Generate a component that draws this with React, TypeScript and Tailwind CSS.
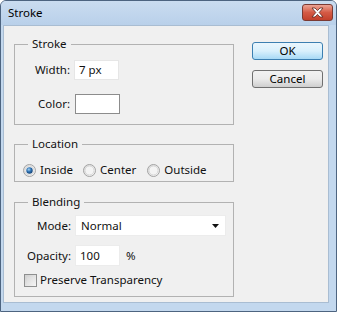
import React from 'react';

const font = { fontFamily: '"Segoe UI", "Noto Sans", Arial, sans-serif' };

function Radio({ checked }: { checked?: boolean }) {
  return (
    <svg width="13" height="13" viewBox="0 0 13 13" className="shrink-0">
      <defs>
        <linearGradient id="rfill" x1="0" y1="0" x2="1" y2="1">
          <stop offset="0" stopColor="#d8d8d8" />
          <stop offset="1" stopColor="#fbfbfb" />
        </linearGradient>
        <radialGradient id="rdot" cx="0.4" cy="0.35" r="0.7">
          <stop offset="0" stopColor="#a6d4f4" />
          <stop offset="0.5" stopColor="#2b6fb0" />
          <stop offset="1" stopColor="#123d6e" />
        </radialGradient>
      </defs>
      <circle cx="6.5" cy="6.5" r="6" fill="url(#rfill)" stroke="#a3a3a3" />
      <circle cx="6.5" cy="6.5" r="4.5" fill="#f4f4f4" stroke="#d0d0d0" strokeWidth="0.8" />
      {checked && <circle cx="6.5" cy="6.5" r="3.2" fill="url(#rdot)" />}
    </svg>
  );
}

function Group({ title, children, className }: { title: string; children: React.ReactNode; className?: string }) {
  return (
    <fieldset className={`border border-[#b2b2b2] w-[220px] ${className ?? ''}`}>
      <legend className="ml-[13px] px-[4px] leading-[16px]">{title}</legend>
      {children}
    </fieldset>
  );
}

export default function App() {
  return (
    <div
      className="w-[337px] h-[312px] flex flex-col bg-[#c3d8ee] border border-[#4d6480] rounded-t-[6px] overflow-hidden text-[11.5px] text-[#111]"
      style={font}
    >
      {/* title bar */}
      <div className="h-[24px] flex items-start justify-between bg-gradient-to-b from-[#cadcf0] to-[#b9d0ea]">
        <span className="ml-[7px] mt-[4px] leading-[16px] text-black">Stroke</span>
        <div className="mt-[3px] mr-[3px] w-[31px] h-[17px] rounded-[3px] border border-[#7a3a33] bg-gradient-to-b from-[#eba394] via-[#d45a45] to-[#c2402b] flex items-center justify-center">
          <svg width="13" height="11" viewBox="0 0 13 11">
            <path
              d="M1 1 L4 1 L6.5 3.6 L9 1 L12 1 L8.2 5.5 L12 10 L9 10 L6.5 7.4 L4 10 L1 10 L4.8 5.5 Z"
              fill="#fff"
              stroke="#5a2620"
              strokeWidth="0.8"
              strokeLinejoin="round"
            />
          </svg>
        </div>
      </div>

      {/* client area */}
      <div className="flex-1 ml-[2px] mr-[7px] mb-[8px] bg-[#f0f0f0] border border-[#a9bdd2] flex pl-[10px] pt-[10px]">
        <div className="flex flex-col">
          <Group title="Stroke">
            <div className="flex flex-col gap-[14px] pt-[8px] pb-[10px]">
              <div className="flex items-center gap-[4px] h-[20px]">
                <span className="w-[55px] text-right">Width:</span>
                <div className="w-[45px] h-[20px] bg-white border border-[#e6e6e6] pl-[4px] leading-[18px]">7 px</div>
              </div>
              <div className="flex items-center gap-[4px] h-[20px]">
                <span className="w-[55px] text-right">Color:</span>
                <div className="ml-[1px] w-[45px] h-[20px] bg-white border border-[#8c8c8c]" />
              </div>
            </div>
          </Group>

          <Group title="Location" className="mt-[11px]">
            <div className="flex items-center h-[16px] mt-[10px] mb-[3px] pl-[8px]">
              <label className="flex items-center gap-[4px]">
                <Radio checked />
                <span>Inside</span>
              </label>
              <label className="flex items-center gap-[4px] ml-[10px]">
                <Radio />
                <span>Center</span>
              </label>
              <label className="flex items-center gap-[4px] ml-[11px]">
                <Radio />
                <span>Outside</span>
              </label>
            </div>
          </Group>

          <Group title="Blending" className="mt-[12px]">
            <div className="flex flex-col pt-[5px] pb-[8px]">
              <div className="flex items-center gap-[4px] h-[21px]">
                <span className="w-[56px] text-right">Mode:</span>
                <div className="w-[151px] h-[21px] bg-white border border-[#ececec] flex items-center justify-between pl-[5px] pr-[6px]">
                  <span>Normal</span>
                  <svg width="7" height="4" viewBox="0 0 7 4">
                    <path d="M0 0 L7 0 L3.5 4 Z" fill="#111" />
                  </svg>
                </div>
              </div>
              <div className="flex items-center gap-[4px] h-[21px] mt-[9px]">
                <span className="w-[56px] text-right">Opacity:</span>
                <div className="w-[45px] h-[21px] bg-white border border-[#ececec] pl-[4px] leading-[19px]">100</div>
                <span className="ml-[2px]">%</span>
              </div>
              <label className="flex items-center gap-[3px] h-[16px] mt-[6px] pl-[9px]">
                <span className="w-[13px] h-[13px] border border-[#8e8f8f] bg-gradient-to-br from-[#cfcfcf] to-[#f6f6f6] p-[2px]">
                  <span className="block w-full h-full bg-gradient-to-br from-[#d9d9d9] to-[#f0f0f0]" />
                </span>
                <span>Preserve Transparency</span>
              </label>
            </div>
          </Group>
        </div>

        <div className="flex flex-col gap-[10px] ml-[18px] mt-[6px]">
          <button className="w-[71px] h-[18px] rounded-[3px] border border-[#3c7fb1] bg-gradient-to-b from-[#eaf6fd] via-[#d9f0fc] to-[#a7d9f5] leading-[14px] text-black">
            OK
          </button>
          <button className="w-[71px] h-[18px] rounded-[3px] border border-[#707070] bg-gradient-to-b from-[#f2f2f2] via-[#ebebeb] to-[#cfcfcf] leading-[14px] text-black">
            Cancel
          </button>
        </div>
      </div>
    </div>
  );
}
